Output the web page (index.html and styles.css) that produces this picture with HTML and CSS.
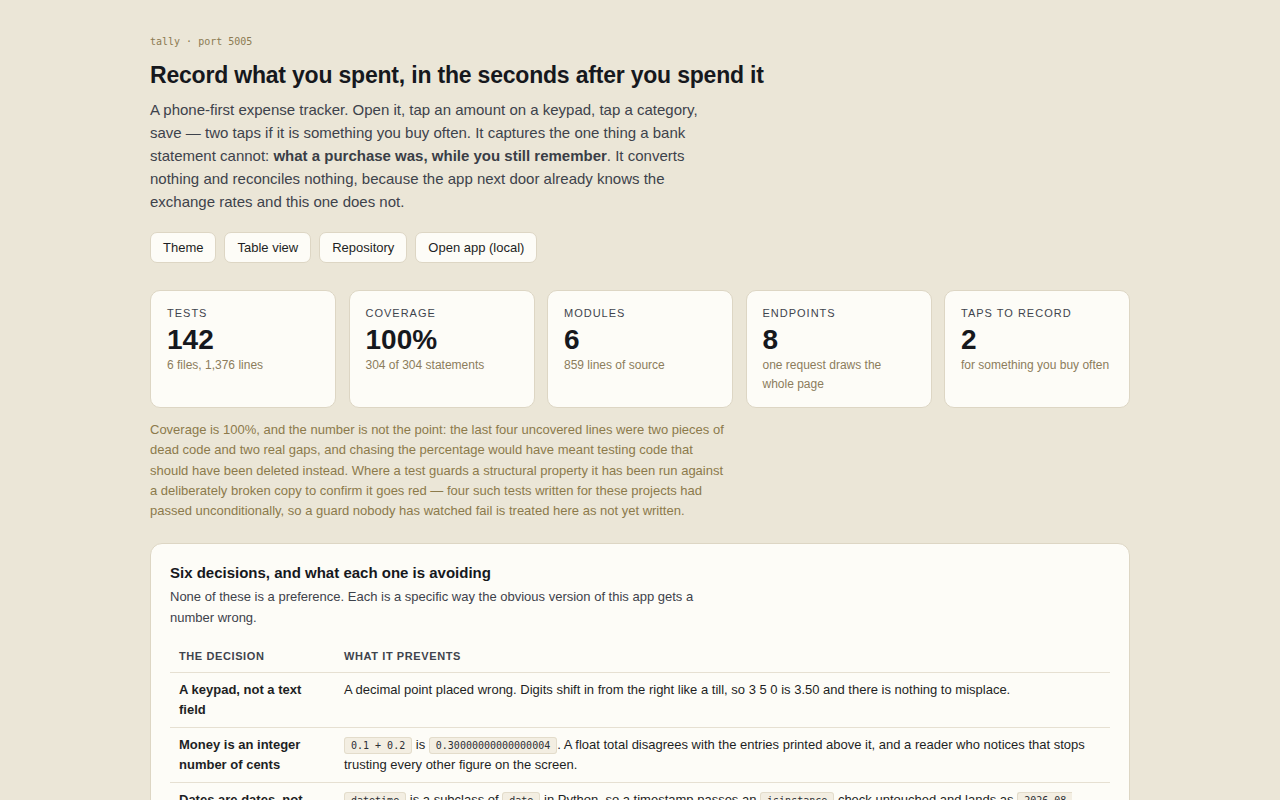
FILE: index.html
```html
<!DOCTYPE html>
<html lang="en">
<head>
<meta charset="utf-8">
<title>tally — record what you spent</title>
<link rel="stylesheet" href="styles.css">
</head>
<body>
<main class="page">
  <header class="intro">
    <p class="eyebrow">tally · port 5005</p>
    <h1 class="title">Record what you spent, in the seconds after you spend it</h1>
    <p class="lede">A phone-first expense tracker. Open it, tap an amount on a keypad, tap a category, save — two taps if it is something you buy often. It captures the one thing a bank statement cannot: <strong>what a purchase was, while you still remember</strong>. It converts nothing and reconciles nothing, because the app next door already knows the exchange rates and this one does not.</p>
    <nav class="actions">
      <a class="btn" href="#">Theme</a>
      <a class="btn" href="#">Table view</a>
      <a class="btn" href="#">Repository</a>
      <a class="btn" href="#">Open app (local)</a>
    </nav>
  </header>

  <section class="stats">
    <div class="stat">
      <div class="stat-label">Tests</div>
      <div class="stat-value">142</div>
      <div class="stat-sub">6 files, 1,376 lines</div>
    </div>
    <div class="stat">
      <div class="stat-label">Coverage</div>
      <div class="stat-value">100%</div>
      <div class="stat-sub">304 of 304 statements</div>
    </div>
    <div class="stat">
      <div class="stat-label">Modules</div>
      <div class="stat-value">6</div>
      <div class="stat-sub">859 lines of source</div>
    </div>
    <div class="stat">
      <div class="stat-label">Endpoints</div>
      <div class="stat-value">8</div>
      <div class="stat-sub">one request draws the whole page</div>
    </div>
    <div class="stat">
      <div class="stat-label">Taps to record</div>
      <div class="stat-value">2</div>
      <div class="stat-sub">for something you buy often</div>
    </div>
  </section>

  <p class="note">Coverage is 100%, and the number is not the point: the last four uncovered lines were two pieces of dead code and two real gaps, and chasing the percentage would have meant testing code that should have been deleted instead. Where a test guards a structural property it has been run against a deliberately broken copy to confirm it goes red — four such tests written for these projects had passed unconditionally, so a guard nobody has watched fail is treated here as not yet written.</p>

  <section class="panel">
    <h2 class="panel-title">Six decisions, and what each one is avoiding</h2>
    <p class="panel-sub">None of these is a preference. Each is a specific way the obvious version of this app gets a number wrong.</p>
    <table class="decisions">
      <thead>
        <tr><th class="col-decision">The decision</th><th>What it prevents</th></tr>
      </thead>
      <tbody>
        <tr>
          <td class="decision">A keypad, not a text field</td>
          <td>A decimal point placed wrong. Digits shift in from the right like a till, so 3 5 0 is 3.50 and there is nothing to misplace.</td>
        </tr>
        <tr>
          <td class="decision">Money is an integer number of cents</td>
          <td><code>0.1 + 0.2</code> is <code>0.30000000000000004</code>. A float total disagrees with the entries printed above it, and a reader who notices that stops trusting every other figure on the screen.</td>
        </tr>
        <tr>
          <td class="decision">Dates are dates, not timestamps</td>
          <td><code>datetime</code> is a subclass of <code>date</code> in Python, so a timestamp passes an <code>isinstance</code> check untouched and lands as <code>2026-08-14T23:30</code> on the wrong day once a timezone is applied.</td>
        </tr>
      </tbody>
    </table>
  </section>
</main>
</body>
</html>
```

FILE: styles.css
```css
* { box-sizing: border-box; }

html, body {
  margin: 0;
  padding: 0;
}

body {
  background: #ebe6d7;
  color: #3d424b;
  font-family: "Liberation Sans", Arial, sans-serif;
}

.page {
  width: 980px;
  margin: 0 auto;
  padding: 34px 0 40px;
}

.eyebrow {
  margin: 0;
  font-family: "DejaVu Sans Mono", monospace;
  font-size: 10px;
  line-height: 16px;
  color: #8c7b52;
}

.title {
  margin: 10px 0 0;
  font-size: 23px;
  line-height: 30px;
  font-weight: 700;
  color: #16181d;
  letter-spacing: -0.2px;
}

.lede {
  margin: 8px 0 0;
  max-width: 560px;
  font-size: 15px;
  line-height: 23px;
  color: #3d424b;
}

.lede strong {
  font-weight: 700;
  color: #3a3e46;
}

.actions {
  display: flex;
  gap: 8px;
  margin-top: 19px;
}

.btn {
  display: inline-flex;
  align-items: center;
  height: 31px;
  padding: 0 12px;
  background: #fdfcf7;
  border: 1px solid #ddd6c4;
  border-radius: 7px;
  font-size: 13px;
  color: #1d1f24;
  text-decoration: none;
}

.stats {
  display: grid;
  grid-template-columns: repeat(5, 1fr);
  gap: 12.5px;
  margin-top: 27px;
}

.stat {
  min-height: 118px;
  padding: 15px 16px 13px;
  background: #fdfcf7;
  border: 1px solid #ddd6c4;
  border-radius: 10px;
}

.stat-label {
  font-size: 11px;
  line-height: 14px;
  letter-spacing: 1px;
  text-transform: uppercase;
  color: #3f444d;
}

.stat-value {
  margin-top: 4px;
  font-size: 28px;
  line-height: 32px;
  font-weight: 700;
  color: #16181d;
}

.stat-sub {
  font-size: 12px;
  line-height: 19px;
  color: #8c7d5c;
}

.note {
  margin: 12px 0 0;
  max-width: 580px;
  font-size: 13px;
  line-height: 20.3px;
  color: #8c7a4b;
}

.panel {
  margin-top: 22px;
  padding: 20px 19px 20px;
  background: #fdfcf7;
  border: 1px solid #ddd6c4;
  border-radius: 12px;
}

.panel-title {
  margin: 0;
  font-size: 15px;
  line-height: 18px;
  font-weight: 700;
  color: #16181d;
}

.panel-sub {
  margin: 4px 0 0;
  max-width: 540px;
  font-size: 13px;
  line-height: 21px;
  color: #3d424b;
}

.decisions {
  width: 100%;
  margin-top: 13px;
  border-collapse: collapse;
  font-size: 13px;
  line-height: 20px;
  color: #1d1f24;
}

.decisions th {
  padding: 7px 9px 8px;
  text-align: left;
  font-size: 11px;
  line-height: 16px;
  font-weight: 700;
  letter-spacing: 0.6px;
  text-transform: uppercase;
  color: #3f444d;
  border-bottom: 1px solid #e6e0d2;
}

.decisions .col-decision {
  width: 165px;
}

.decisions td {
  padding: 7px 9px 7px;
  vertical-align: top;
  border-bottom: 1px solid #e6e0d2;
}

.decisions .decision {
  font-weight: 700;
  color: #1d1f24;
}

code {
  padding: 2px 6px;
  font-family: "DejaVu Sans Mono", monospace;
  font-size: 10px;
  line-height: 18px;
  color: #2c2f35;
  background: #f3eee2;
  border: 1px solid #e3dccb;
  border-radius: 3px;
}
```
